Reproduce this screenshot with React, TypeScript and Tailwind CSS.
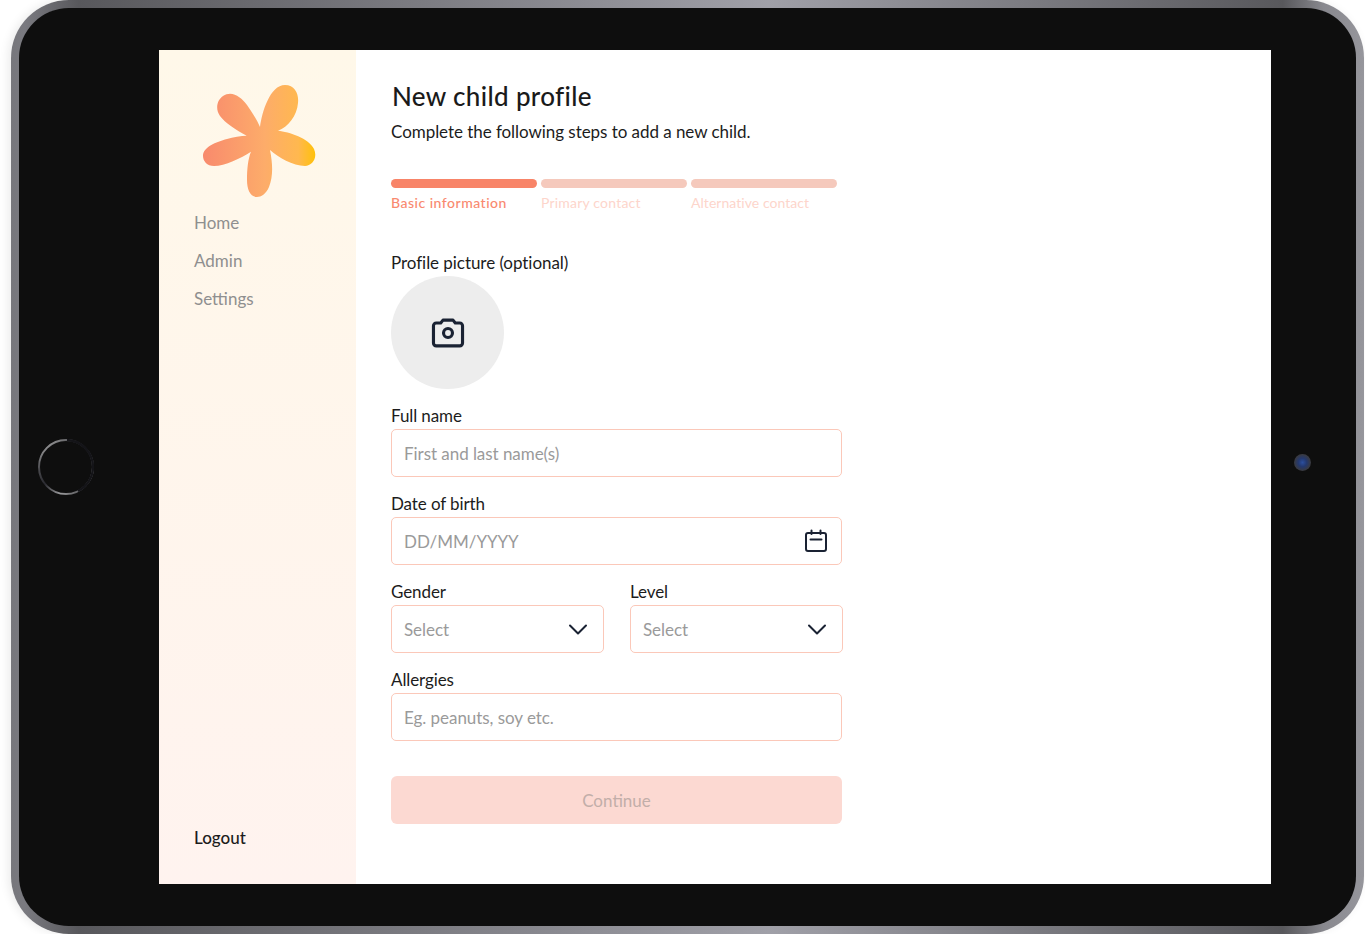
import React from 'react';

const FONT = "font-['Lato','Noto_Sans',sans-serif]";

const Field = ({ label, placeholder, icon, className = '' }: { label: string; placeholder: string; icon?: React.ReactNode; className?: string }) => (
  <div className={`flex flex-col ${className}`}>
    <label className="h-[26px] pt-[2px] text-[17px] leading-[22px] tracking-[-0.1px] text-[#1c1c1c]">{label}</label>
    <div className="h-[48px] flex items-center rounded-[5px] border border-[#fbc8b9] pl-[12px] pr-[13px] bg-white">
      <input
        readOnly
        placeholder={placeholder}
        className="flex-1 min-w-0 pt-[1px] bg-transparent outline-none text-[17px] tracking-[-0.05px] placeholder:text-[#9a9a9a]"
      />
      {icon}
    </div>
  </div>
);

const Chevron = () => (
  <svg width="20" height="13" viewBox="0 0 20 13" fill="none" stroke="#1a2233" strokeWidth="2" strokeLinecap="round" strokeLinejoin="round" className="shrink-0 mr-[2px]">
    <path d="M2 2.5L10 10.5L18 2.5" />
  </svg>
);

const Calendar = () => (
  <svg width="24" height="24" viewBox="0 0 24 24" fill="none" stroke="#1a2233" strokeWidth="2" strokeLinecap="round" strokeLinejoin="round" className="shrink-0">
    <rect x="2" y="4" width="20" height="18" rx="2" />
    <path d="M7.5 1.5V5M16.5 1.5V5M6.5 10.5H17.5" />
  </svg>
);

const Flower = () => (
  <svg width="113" height="112" viewBox="0 0 113 112">
    <defs>
      <linearGradient id="flower" x1="0" y1="0" x2="1" y2="0">
        <stop offset="0" stopColor="#f88a6d" />
        <stop offset="0.55" stopColor="#fdac6a" />
        <stop offset="0.85" stopColor="#ffb84f" />
        <stop offset="1" stopColor="#ffc10a" />
      </linearGradient>
    </defs>
    <path
      fill="url(#flower)"
      d="M57 42C59 27 67 0 82 0C92 0 96 9 95 18C94 31 85 42 75 45.7C86 47 106 53 111 64C115 73 109 81 102 81C90 81 75 72 67 65C70 80 70 92 66 102C63 109 58 112 54 112C47 112 44 104 44 95C44 84 45 74 48 66.7C38 73 22 81 11 81C4 81 0 76 0 71C0 62 13 57 24 54C30 52 38 51 43.7 50.7C33 45 22 38 17 31C12 24 14 15 20 11C29 5 38 12 44 20C49 27 54 35 57 42Z"
    />
  </svg>
);

const App: React.FC = () => {
  return (
    <div className={`w-[1365px] h-[934px] bg-white pl-[11px] pr-[1px] overflow-hidden ${FONT}`}>
      {/* device frame */}
      <div className="h-full rounded-[58px] p-[8px] shadow-[-3px_0_10px_rgba(0,0,0,0.08)] bg-[linear-gradient(90deg,#77777c_0%,#7a7a80_1%,#58585c_5%,#a0a0a8_56%,#58585c_94%,#88888e_97%,#96969c_100%)]">
        <div className="h-full rounded-[50px] bg-[#0e0e0e] flex items-center">
          <div className="w-[140px] shrink-0 flex justify-start pl-[17px]">
            <svg width="60" height="60" viewBox="0 0 60 60" fill="none">
              <defs>
                <linearGradient id="ring" x1="0.1" y1="0" x2="0.9" y2="1">
                  <stop offset="0" stopColor="#b0b0b0" />
                  <stop offset="0.28" stopColor="#4a4a4e" />
                  <stop offset="0.5" stopColor="#2a2a30" />
                  <stop offset="0.75" stopColor="#9a9a9c" />
                  <stop offset="1" stopColor="#3a3a3e" />
                </linearGradient>
              </defs>
              <circle cx="30" cy="30" r="27" stroke="url(#ring)" strokeWidth="2" />
              <path d="M31 3A27 27 0 0 1 57 30A27 27 0 0 1 42 54" stroke="#141418" strokeWidth="2.4" />
            </svg>
          </div>

          {/* screen */}
          <div className="w-[1112px] h-[834px] shrink-0 flex bg-white text-[#1c1c1c]">
            <aside className="w-[197px] shrink-0 flex flex-col pl-[35px] pb-[34px] bg-[linear-gradient(180deg,#fff8e9_0%,#fff3ef_100%)]">
              <div className="pt-[35px] pl-[9px]"><Flower /></div>
              <nav className="mt-[14px] flex flex-col gap-[14px] text-[17px] leading-[24px] text-[#8f8f8f]">
                <span>Home</span>
                <span>Admin</span>
                <span>Settings</span>
              </nav>
              <span className="mt-auto text-[17px] leading-[24px] font-medium text-[#1c1c1c]">Logout</span>
            </aside>

            <main className="flex-1 pl-[35px] pt-[29px]">
              <h1 className="pl-[1px] text-[26px] leading-[34px] font-medium tracking-[0.35px] text-[#1a1a1a]">New child profile</h1>
              <p className="mt-[7px] text-[17px] leading-[24px] tracking-[-0.05px]">Complete the following steps to add a new child.</p>

              <div className="mt-[35px] w-[446px] grid grid-cols-3 gap-x-[4px]">
                <div className="h-[9px] rounded-full bg-[#f88468]" />
                <div className="h-[9px] rounded-full bg-[#f5c9bc]" />
                <div className="h-[9px] rounded-full bg-[#f5c9bc]" />
                <span className="mt-[6px] text-[14px] leading-[18px] tracking-[0.5px] text-[#f98a70] font-medium">Basic information</span>
                <span className="mt-[6px] text-[14px] leading-[18px] tracking-[0.2px] text-[#fdd5cb]">Primary contact</span>
                <span className="mt-[6px] text-[14px] leading-[18px] tracking-[0.05px] text-[#fdd5cb]">Alternative contact</span>
              </div>

              <p className="mt-[38px] h-[26px] pt-[1px] text-[17px] leading-[24px] tracking-[-0.05px]">Profile picture (optional)</p>
              <div className="w-[113px] h-[113px] rounded-full bg-[#ededed] flex items-center justify-center">
                <svg width="38" height="38" viewBox="0 1.5 34 34" fill="none" stroke="#1a2233" strokeWidth="2.8" strokeLinejoin="round">
                  <path d="M4 12a2.5 2.5 0 0 1 2.5-2.5h4L12.5 7h9l2 2.5h4A2.5 2.5 0 0 1 30 12v15.5A2.5 2.5 0 0 1 27.5 30h-21A2.5 2.5 0 0 1 4 27.5Z" />
                  <circle cx="17" cy="18.5" r="4" />
                </svg>
              </div>

              <div className="mt-[14px] w-[452px] flex flex-col gap-[14px]">
                <Field label="Full name" placeholder="First and last name(s)" className="w-[451px]" />
                <Field label="Date of birth" placeholder="DD/MM/YYYY" icon={<Calendar />} className="w-[451px]" />
                <div className="flex gap-[26px]">
                  <Field label="Gender" placeholder="Select" icon={<Chevron />} className="w-[213px]" />
                  <Field label="Level" placeholder="Select" icon={<Chevron />} className="w-[213px]" />
                </div>
                <Field label="Allergies" placeholder="Eg. peanuts, soy etc." className="w-[451px]" />
              </div>

              <button className="mt-[35px] w-[451px] h-[48px] pt-[1px] rounded-[6px] bg-[#fcd9d2] text-[17px] text-[#c2aea9]">Continue</button>
            </main>
          </div>

          <div className="flex-1 flex justify-center pr-[22px] pb-[10px]">
            <div className="w-[17px] h-[17px] rounded-full bg-[radial-gradient(circle,#2c4f9e_0%,#24386e_35%,#3a3a3e_70%,#161616_100%)]" />
          </div>
        </div>
      </div>
    </div>
  );
};

export default App;
